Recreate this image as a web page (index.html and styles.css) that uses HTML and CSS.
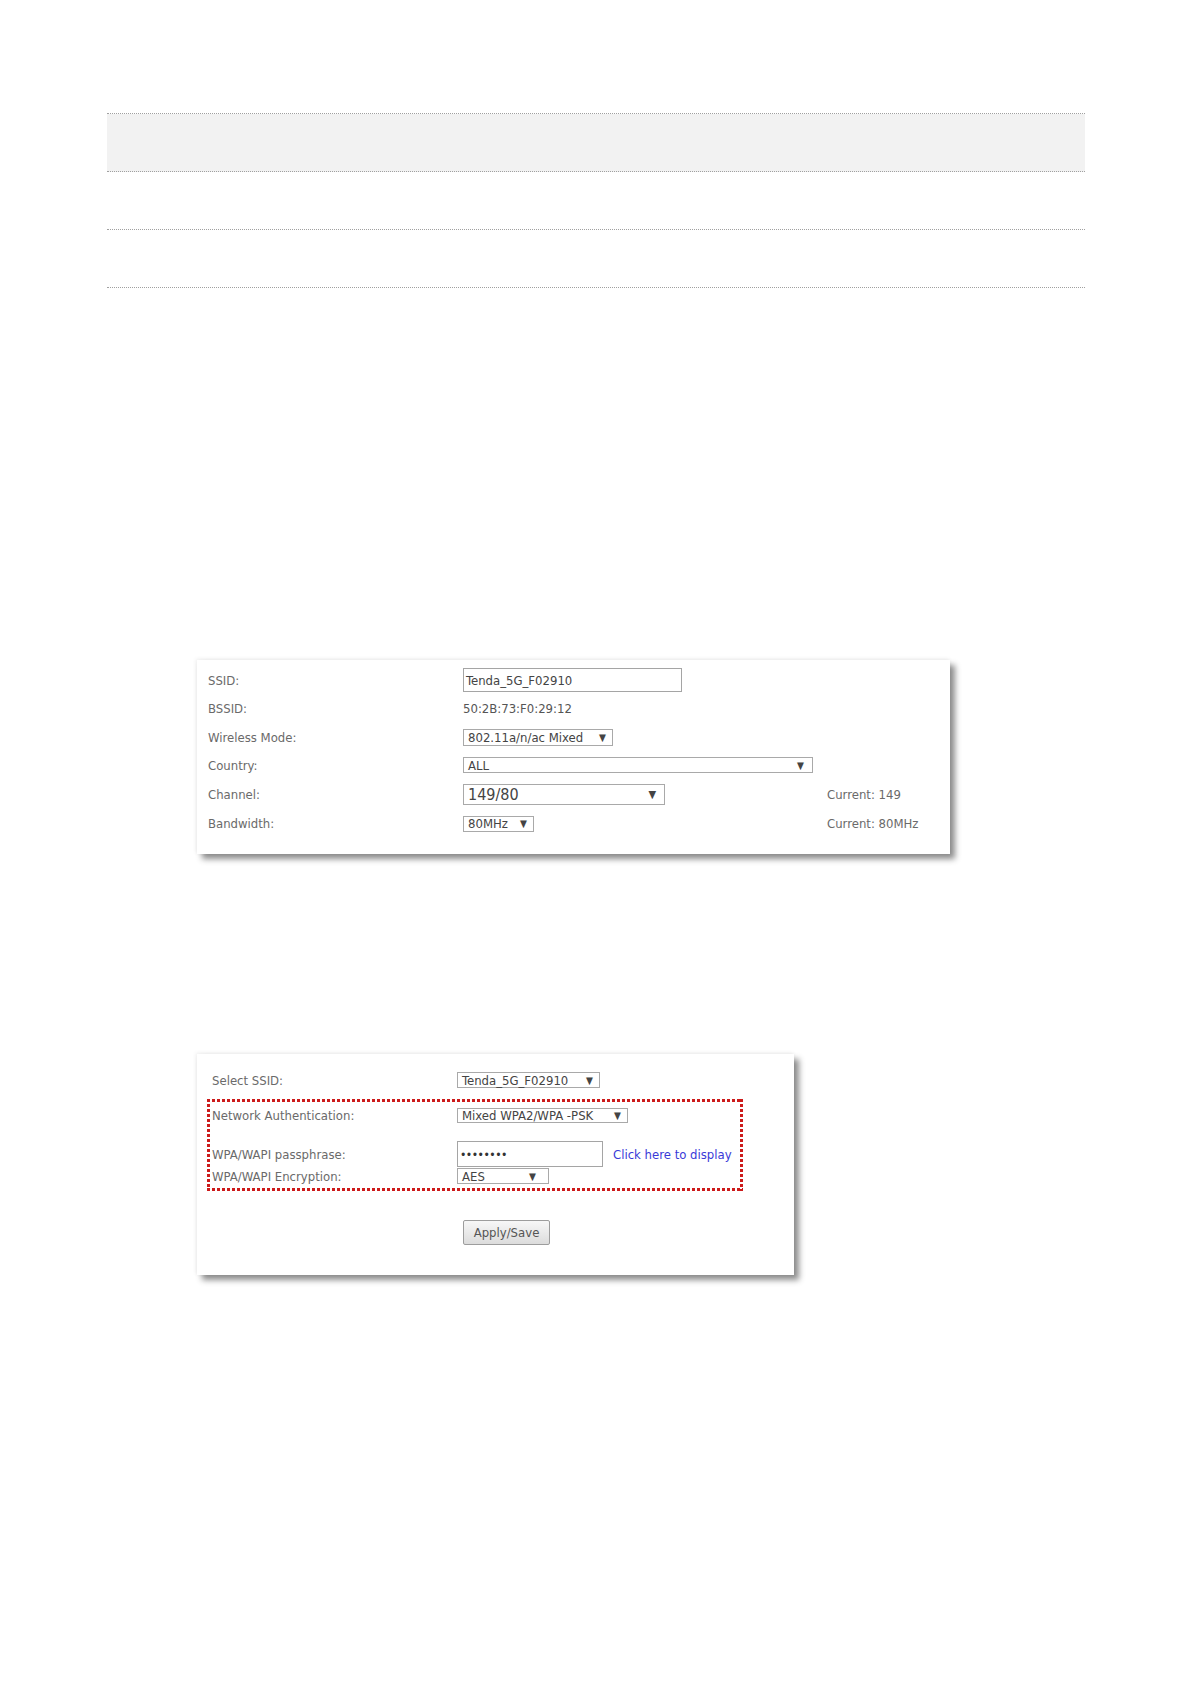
FILE: index.html
```html
<!DOCTYPE html>
<html lang="en">
<head>
<meta charset="utf-8">
<title>Wireless settings</title>
<link rel="stylesheet" href="styles.css">
</head>
<body>
<div class="rules">
  <div class="rule rule-head"></div>
  <div class="rule"></div>
  <div class="rule"></div>
</div>

<div class="panel panel-basic">
  <div class="grid">
    <div class="lbl">SSID:</div>
    <div class="val"><div class="input input-ssid">Tenda_5G_F02910</div></div>
    <div class="cur"></div>

    <div class="lbl">BSSID:</div>
    <div class="val"><span class="plain">50:2B:73:F0:29:12</span></div>
    <div class="cur"></div>

    <div class="lbl">Wireless Mode:</div>
    <div class="val"><div class="select sel-mode"><span class="txt">802.11a/n/ac Mixed</span><span class="arrow">▼</span></div></div>
    <div class="cur"></div>

    <div class="lbl">Country:</div>
    <div class="val"><div class="select sel-country"><span class="txt">ALL</span><span class="arrow">▼</span></div></div>
    <div class="cur"></div>

    <div class="lbl">Channel:</div>
    <div class="val"><div class="select sel-channel"><span class="txt">149/80</span><span class="arrow">▼</span></div></div>
    <div class="cur">Current: 149</div>

    <div class="lbl">Bandwidth:</div>
    <div class="val"><div class="select sel-bw"><span class="txt">80MHz</span><span class="arrow">▼</span></div></div>
    <div class="cur">Current: 80MHz</div>
  </div>
</div>

<div class="panel panel-sec">
  <div class="row row-ssid">
    <div class="lbl lbl2">Select SSID:</div>
    <div class="select sel-ssid"><span class="txt">Tenda_5G_F02910</span><span class="arrow">▼</span></div>
  </div>
  <div class="authbox">
    <div class="row row-auth">
      <div class="lbl lbl2">Network Authentication:</div>
      <div class="select sel-auth"><span class="txt">Mixed WPA2/WPA -PSK</span><span class="arrow">▼</span></div>
    </div>
    <div class="row row-pass">
      <div class="lbl lbl2">WPA/WAPI passphrase:</div>
      <div class="input input-pass">••••••••</div>
      <span class="link">Click here to display</span>
    </div>
    <div class="row row-enc">
      <div class="lbl lbl2">WPA/WAPI Encryption:</div>
      <div class="select sel-aes"><span class="txt">AES</span><span class="arrow">▼</span></div>
    </div>
  </div>
  <div class="btnrow">
    <button class="btn" type="button">Apply/Save</button>
  </div>
</div>
</body>
</html>
```

FILE: styles.css
```css
html, body {
  margin: 0;
  padding: 0;
  background: #ffffff;
}
body {
  width: 1191px;
  min-height: 1684px;
  font-family: "DejaVu Sans Condensed", "Liberation Sans", sans-serif;
  font-size: 13px;
  color: #666;
}

/* top table rules */
.rules {
  margin: 113px 0 0 107px;
  width: 978px;
  border-top: 1px dotted #a0a0a0;
}
.rule {
  height: 57px;
  border-bottom: 1px dotted #a0a0a0;
}
.rule-head {
  background: #f2f2f2;
}

/* panels */
.panel {
  margin-left: 197px;
  background: #fff;
  box-shadow: 5px 5px 6px rgba(0, 0, 0, 0.45), -1px -1px 4px rgba(0, 0, 0, 0.08);
  box-sizing: border-box;
}
.panel-basic {
  margin-top: 372px;
  width: 753px;
  height: 194px;
  padding: 6px 0 0 11px;
}
.grid {
  display: grid;
  grid-template-columns: 255px 364px auto;
  grid-template-rows: 28px 29px 28px 28px 30px 29px;
  align-items: center;
}
.lbl {
  color: #6a6a6a;
  white-space: nowrap;
}
.cur {
  color: #6a6a6a;
  white-space: nowrap;
}
.val {
  display: flex;
  align-items: center;
}
.plain {
  color: #555;
}

.input {
  box-sizing: border-box;
  border: 1px solid #a5a5a5;
  background: #fff;
  color: #444;
  display: flex;
  align-items: center;
  padding-left: 2px;
  white-space: nowrap;
}
.input-ssid {
  width: 219px;
  height: 24px;
}
.select {
  box-sizing: border-box;
  border: 1px solid #a9a9a9;
  background: #fff;
  color: #444;
  display: flex;
  align-items: center;
  justify-content: space-between;
  padding: 0 6px 0 4px;
  white-space: nowrap;
}
.arrow {
  font-size: 10px;
  color: #444;
  margin-left: 6px;
}
.sel-mode { width: 150px; height: 17px; }
.sel-country { width: 350px; height: 16px; padding-right: 8px; }
.sel-channel { width: 202px; height: 21px; font-size: 16px; padding-right: 8px; }
.sel-channel .arrow { font-size: 11px; }
.sel-bw { width: 71px; height: 16px; }

/* security panel */
.panel-sec {
  margin-top: 200px;
  width: 597px;
  height: 221px;
  padding-top: 16px;
}
.row {
  display: flex;
  align-items: center;
}
.lbl2 {
  width: 245px;
  flex: none;
}
.row-ssid {
  height: 20px;
  padding-left: 15px;
}
.sel-ssid { width: 143px; height: 16px; }

.authbox {
  margin: 9px 0 0 10px;
  width: 536px;
  box-sizing: border-box;
  padding: 9px 3px 7px 5px;
  background:
    linear-gradient(to right, #cc1a1a 60%, transparent 0) top left / 5px 3px repeat-x,
    linear-gradient(to right, #cc1a1a 60%, transparent 0) bottom left / 5px 3px repeat-x,
    linear-gradient(#cc1a1a 60%, transparent 0) top left / 3px 5px repeat-y,
    linear-gradient(#cc1a1a 60%, transparent 0) top right / 3px 5px repeat-y;
}
.row-auth { height: 15px; }
.sel-auth { width: 171px; height: 15px; }
.row-pass {
  margin-top: 18px;
  height: 26px;
}
.input-pass {
  width: 146px;
  height: 26px;
  font-size: 12px;
  color: #333;
  letter-spacing: -0.5px;
  padding-top: 2px;
}
.link {
  color: #3a3ad8;
  margin-left: 10px;
  font-size: 13px;
}
.row-enc {
  margin-top: 1px;
  height: 16px;
}
.sel-aes { width: 92px; height: 16px; padding-right: 12px; }

.btnrow {
  margin: 29px 0 0 266px;
}
.btn {
  width: 87px;
  height: 25px;
  border: 1px solid #9d9d9d;
  border-radius: 2px;
  background: linear-gradient(#f7f7f7, #dcdcdc);
  color: #555;
  font-family: "DejaVu Sans Condensed", "Liberation Sans", sans-serif;
  font-size: 13px;
  padding: 0;
}
```
